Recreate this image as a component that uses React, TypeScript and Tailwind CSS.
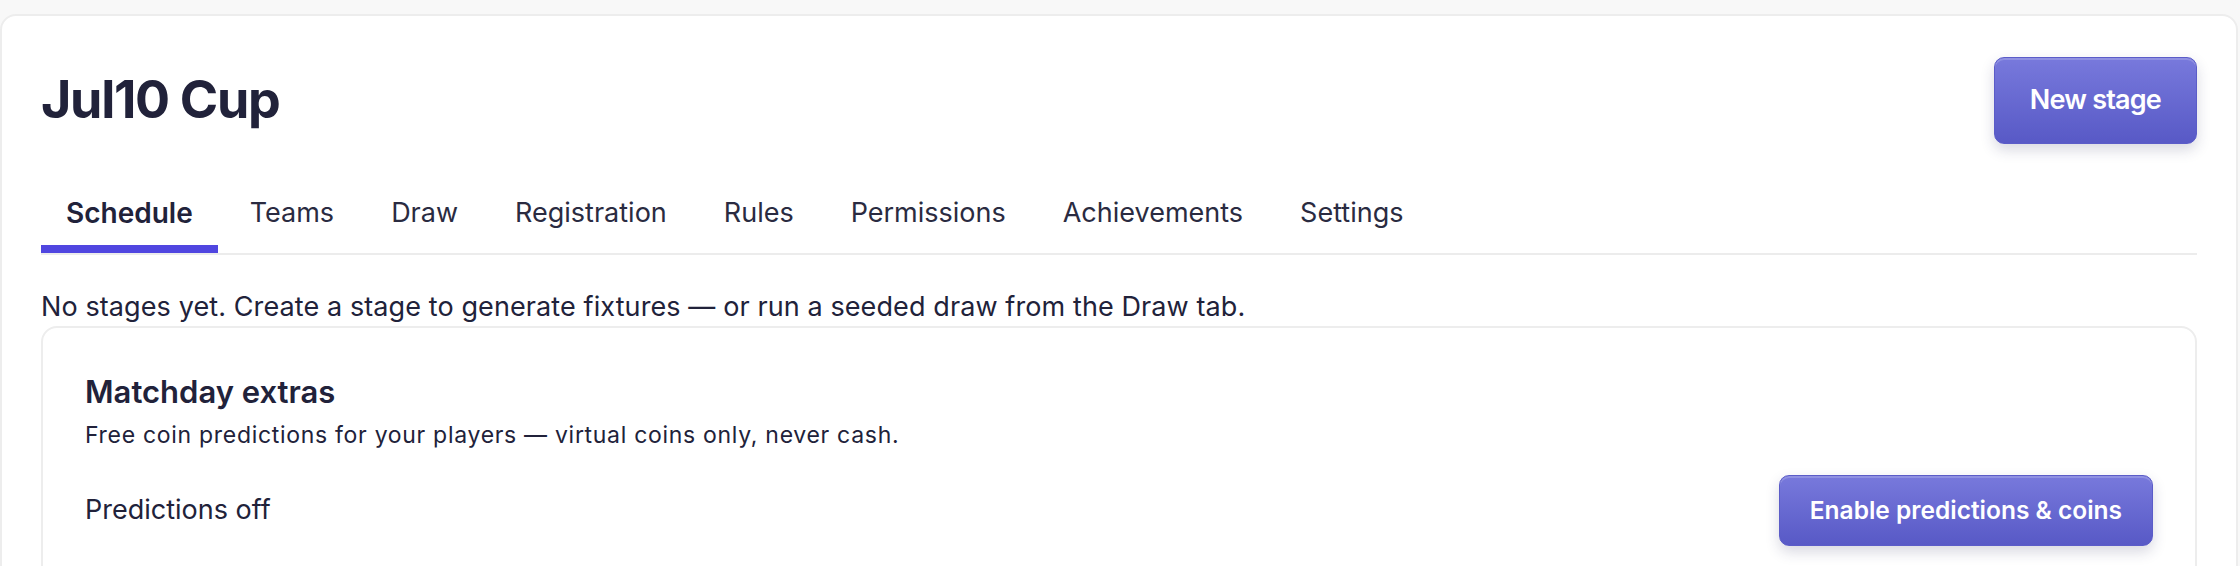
const tabs = [
  "Schedule",
  "Teams",
  "Draw",
  "Registration",
  "Rules",
  "Permissions",
  "Achievements",
  "Settings",
];

const primaryBtn =
  "rounded-[10px] border border-[#5b5cc8] bg-linear-to-b from-[#7879dc] to-[#5859c6] text-white font-semibold shadow-[inset_0_2px_0_rgba(255,255,255,0.18),0_6px_14px_rgba(40,40,90,0.18)]";

const App = () => {
  return (
    <div className="min-h-screen bg-[#f8f8f8] pt-[14px] pr-[2px] font-['Inter',sans-serif] text-[#21223a]">
      <div className="rounded-[16px] border-2 border-[#ededed] bg-white px-[39px] pt-[41px] pb-[40px]">
        {/* Header */}
        <div className="flex items-center justify-between">
          <h1 className="text-[52px] leading-[1.2] font-bold tracking-[-1.3px]">Jul10 Cup</h1>
          <button className={`${primaryBtn} h-[87px] px-[35px] text-[27px] tracking-[-0.8px]`}>
            New stage
          </button>
        </div>

        {/* Tabs */}
        <nav className="mt-[48px] flex gap-[7px] border-b-2 border-[#ececec]">
          {tabs.map((t, i) => (
            <div
              key={t}
              className={
                i === 0
                  ? "border-b-[8px] border-[#5046e0] px-[25px] pb-[11px] text-[28px] leading-[42px] font-semibold"
                  : "border-b-[8px] border-transparent px-[25px] pb-[11px] text-[27px] leading-[42px] text-[#2a2b41]"
              }
            >
              {t}
            </div>
          ))}
        </nav>

        <p className="mt-[32px] text-[27px] leading-[39px] tracking-[0.1px]">
          No stages yet. Create a stage to generate fixtures — or run a seeded draw from the Draw tab.
        </p>

        {/* Matchday extras */}
        <div className="rounded-[16px] border-2 border-[#ededed] bg-white px-[42px] pt-[44px] pb-[40px]">
          <h2 className="text-[31px] leading-[39px] font-semibold">Matchday extras</h2>
          <p className="mt-[8px] text-[23px] leading-[33px] tracking-[0.7px]">
            Free coin predictions for your players — virtual coins only, never cash.
          </p>
          <div className="mt-[23px] flex items-center justify-between">
            <span className="text-[27px]">Predictions off</span>
            <button className={`${primaryBtn} h-[71px] px-[30px] text-[24.5px]`}>
              Enable predictions &amp; coins
            </button>
          </div>
        </div>
      </div>
    </div>
  );
};

export default App;
